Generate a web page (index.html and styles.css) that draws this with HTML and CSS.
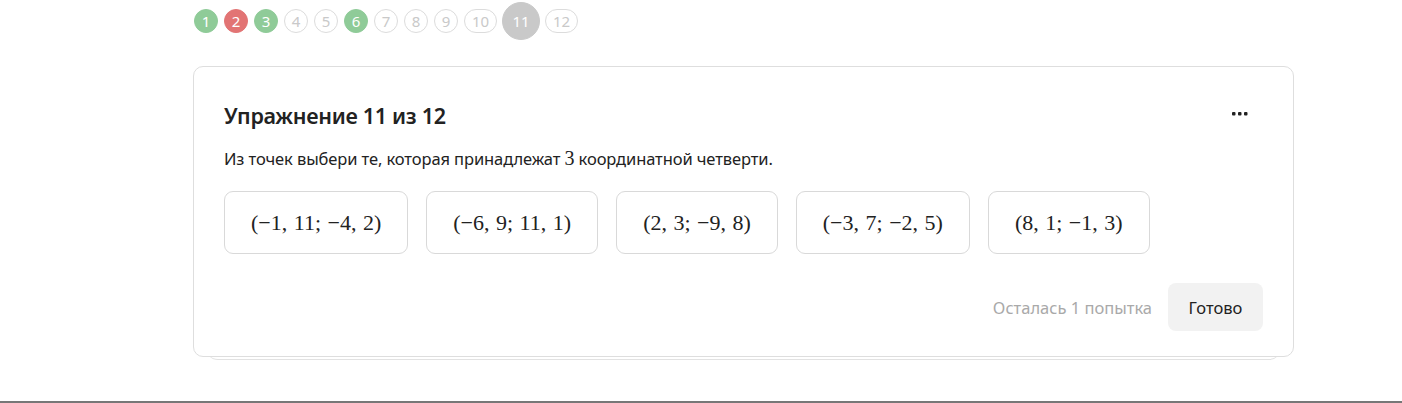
FILE: index.html
```html
<!DOCTYPE html>
<html lang="ru">

<head>
    <meta charset="UTF-8">
    <meta name="viewport" content="width=device-width, initial-scale=1.0">
    <title>Упражнение 11 из 12</title>
    <link rel="stylesheet" href="styles.css">
</head>

<body>
    <div class="page">
        <div class="steps">
            <span class="step done">1</span>
            <span class="step wrong">2</span>
            <span class="step done">3</span>
            <span class="step">4</span>
            <span class="step">5</span>
            <span class="step done">6</span>
            <span class="step">7</span>
            <span class="step">8</span>
            <span class="step">9</span>
            <span class="step wide">10</span>
            <span class="step current">11</span>
            <span class="step wide">12</span>
        </div>

        <div class="stack">
            <div class="card">
                <div class="card-head">
                    <h2>Упражнение 11 из 12</h2>
                    <svg class="more" width="16" height="4" viewBox="0 0 16 4">
                        <rect x="0" y="0" width="3.5" height="3.5" rx="1" fill="#222" />
                        <rect x="6" y="0" width="3.5" height="3.5" rx="1" fill="#222" />
                        <rect x="12" y="0" width="3.5" height="3.5" rx="1" fill="#222" />
                    </svg>
                </div>
                <p class="task">Из точек выбери те, которая принадлежат <span class="math">3</span> координатной четверти.</p>

                <div class="options">
                    <button class="option math">(−1, 11; −4, 2)</button>
                    <button class="option math">(−6, 9; 11, 1)</button>
                    <button class="option math">(2, 3; −9, 8)</button>
                    <button class="option math">(−3, 7; −2, 5)</button>
                    <button class="option math">(8, 1; −1, 3)</button>
                </div>

                <div class="card-foot">
                    <span class="tries">Осталась 1 попытка</span>
                    <button class="ready">Готово</button>
                </div>
            </div>
        </div>
    </div>
    <div class="bottom-line"></div>
</body>

</html>
```

FILE: styles.css
```css
* {
    padding: 0px;
    margin: 0px;
    box-sizing: border-box;
}

body {
    font-family: "Noto Sans", "Open Sans", sans-serif;
    color: #222;
    background: #fff;
    height: 403px;
    overflow: hidden;
    position: relative;
}

.page {
    width: 1101px;
    margin-left: 193px;
}

.steps {
    display: flex;
    align-items: center;
    gap: 6px;
    height: 42px;
    padding-left: 1px;
}

.step {
    width: 24px;
    height: 24px;
    border-radius: 12px;
    border: 1px solid #dcdcdc;
    color: #c9c9c9;
    font-size: 15px;
    display: flex;
    align-items: center;
    justify-content: center;
}

.step.wide {
    width: 33px;
}

.step.done {
    background: #8fcb98;
    border-color: #8fcb98;
    color: #fff;
}

.step.wrong {
    background: #e27474;
    border-color: #e27474;
    color: #fff;
}

.step.current {
    width: 38px;
    height: 38px;
    border-radius: 19px;
    background: #c9c9c9;
    border-color: #c9c9c9;
    color: #fff;
    margin: 0 -1px;
}

.stack {
    margin-top: 24px;
    padding-bottom: 2px;
    border-bottom: 1px solid #e2e2e2;
    border-radius: 0 0 12px 12px;
    margin-left: 13px;
    margin-right: 13px;
}

.card {
    margin: 0 -13px;
    border: 1px solid #dedede;
    border-radius: 10px;
    background: #fff;
    padding: 28px 30px 25px 30px;
}

.card-head {
    display: flex;
    justify-content: space-between;
    align-items: center;
    height: 40px;
}

h2 {
    font-size: 21.5px;
    font-weight: 600;
    letter-spacing: -0.3px;
}

.more {
    margin-right: 15px;
    margin-top: -2px;
}

.task {
    font-size: 16.5px;
    margin-top: 12px;
    letter-spacing: -0.1px;
}

.task .math {
    font-size: 20px;
}

.math {
    font-family: "Liberation Serif", "DejaVu Serif", serif;
}

.options {
    display: flex;
    gap: 18px;
    margin-top: 21px;
}

.option {
    height: 63px;
    padding: 0 26px;
    border: 1px solid #d9d9d9;
    border-radius: 9px;
    background: #fff;
    color: #222;
    font-size: 22px;
    word-spacing: 1px;
}

.card-foot {
    display: flex;
    justify-content: flex-end;
    align-items: center;
    gap: 16px;
    margin-top: 29px;
}

.tries {
    font-size: 16.5px;
    color: #a9a9a9;
}

.ready {
    width: 95px;
    height: 48px;
    border: none;
    border-radius: 8px;
    background: #f2f2f2;
    color: #222;
    font-family: "Noto Sans", sans-serif;
    font-size: 16.5px;
}

.bottom-line {
    position: absolute;
    left: 0;
    right: 0;
    bottom: 0;
    height: 2px;
    background: #777;
}
```
